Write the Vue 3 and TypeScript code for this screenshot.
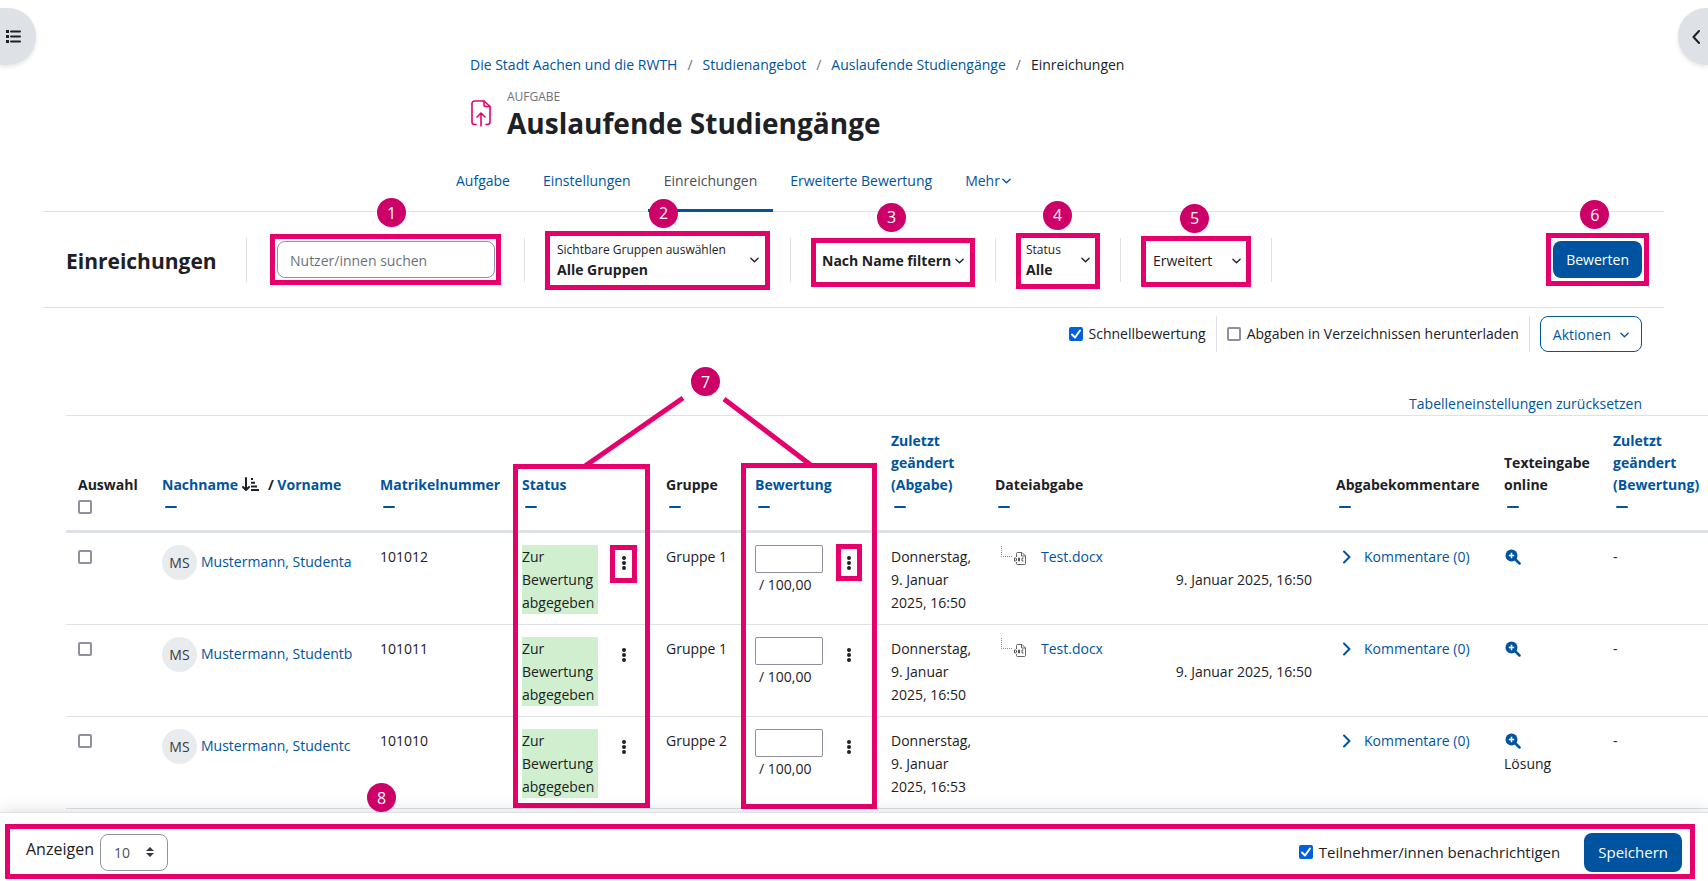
<script setup lang="ts">
import { ref } from 'vue'

interface Submission {
  name: string
  matriculation: string
  group: string
  time: string
  file: string | null
  solution: boolean
}

const crumbs = ['Die Stadt Aachen und die RWTH', 'Studienangebot', 'Auslaufende Studiengänge']
const tabs = ['Aufgabe', 'Einstellungen', 'Einreichungen', 'Erweiterte Bewertung']
const columns = [
  { key: 'sel', label: 'Auswahl', link: false },
  { key: 'name', label: 'Nachname', link: true },
  { key: 'mat', label: 'Matrikelnummer', link: true },
  { key: 'status', label: 'Status', link: true },
  { key: 'group', label: 'Gruppe', link: false },
  { key: 'grade', label: 'Bewertung', link: true },
  { key: 'changed', label: 'Zuletzt geändert (Abgabe)', link: true },
  { key: 'file', label: 'Dateiabgabe', link: false },
  { key: 'comments', label: 'Abgabekommentare', link: false },
  { key: 'text', label: 'Texteingabe online', link: false },
  { key: 'graded', label: 'Zuletzt geändert (Bewertung)', link: true },
]
const rows: Submission[] = [
  { name: 'Mustermann, Studenta', matriculation: '101012', group: 'Gruppe 1', time: '16:50', file: 'Test.docx', solution: false },
  { name: 'Mustermann, Studentb', matriculation: '101011', group: 'Gruppe 1', time: '16:50', file: 'Test.docx', solution: false },
  { name: 'Mustermann, Studentc', matriculation: '101010', group: 'Gruppe 2', time: '16:53', file: null, solution: true },
]
const quickGrading = ref(true)
const folders = ref(false)
const notify = ref(true)
const search = ref('')
const perPage = ref('10')
</script>

<template>
  <div class="page">
    <button class="drawer drawer-left" type="button" aria-label="Kursindex öffnen">
      <svg width="15" height="14" viewBox="0 0 15 14">
        <path d="M0 0h3v3H0zM0 5h3v3H0zM0 10h3v3H0z" fill="#1d2125" />
        <path d="M5 1.500h9M5 6.500h9M5 11.500h9" stroke="#1d2125" stroke-width="2" stroke-linecap="round" />
      </svg>
    </button>
    <button class="drawer drawer-right" type="button" aria-label="Blockleiste öffnen">
      <svg width="10" height="14" viewBox="0 0 10 14">
        <path d="M8 1L2.500 7L8 13" fill="none" stroke="#1d2125" stroke-width="2" stroke-linecap="round" stroke-linejoin="round" />
      </svg>
    </button>

    <main class="main">
      <header class="header">
        <nav class="crumbs" aria-label="Brotkrümel">
          <template v-for="c in crumbs" :key="c">
            <a href="#">{{ c }}</a><span class="slash">/</span>
          </template>
          <span>Einreichungen</span>
        </nav>
        <div class="title">
          <svg class="title-icon" width="20" height="27" viewBox="0 0 20 27" fill="none" stroke="#e6006b" stroke-width="1.6" stroke-linecap="round" stroke-linejoin="round">
            <path d="M5 24.500H3.500A2.500 2.500 0 0 1 1 22V3.500A2.500 2.500 0 0 1 3.500 1H13l6 5.500V22a2.500 2.500 0 0 1-2.500 2.500H15" />
            <path d="M13 1v4a1.500 1.500 0 0 0 1.500 1.500H19" />
            <path d="M10 26V13.500M6 17l4-4 4 4" />
          </svg>
          <div>
            <div class="kind">AUFGABE</div>
            <h1>Auslaufende Studiengänge</h1>
          </div>
        </div>
        <nav class="tabs" aria-label="Aufgabe">
          <a v-for="t in tabs" :key="t" href="#" class="tab" :class="{ active: t === 'Einreichungen' }">{{ t }}</a>
          <a href="#" class="tab">Mehr<svg class="caret" viewBox="0 0 10 6"><path d="M1 1l4 4 4-4" /></svg></a>
        </nav>
      </header>

      <section class="bar">
        <h2>Einreichungen</h2>
        <span class="rule"></span>
        <div class="tool search">
          <input v-model="search" type="text" placeholder="Nutzer/innen suchen" aria-label="Nutzer/innen suchen">
          <span class="frame"></span><span class="mark">1</span>
        </div>
        <span class="rule"></span>
        <div class="tool groups">
          <button type="button" class="pick"><span class="lines"><small>Sichtbare Gruppen auswählen</small><b>Alle Gruppen</b></span><svg class="caret" viewBox="0 0 10 6"><path d="M1 1l4 4 4-4" /></svg></button>
          <span class="frame"></span><span class="mark">2</span>
        </div>
        <span class="rule"></span>
        <div class="tool names">
          <button type="button" class="pick"><b>Nach Name filtern</b><svg class="caret" viewBox="0 0 10 6"><path d="M1 1l4 4 4-4" /></svg></button>
          <span class="frame"></span><span class="mark">3</span>
        </div>
        <span class="rule"></span>
        <div class="tool state">
          <button type="button" class="pick"><span class="lines"><small>Status</small><b>Alle</b></span><svg class="caret" viewBox="0 0 10 6"><path d="M1 1l4 4 4-4" /></svg></button>
          <span class="frame"></span><span class="mark">4</span>
        </div>
        <span class="rule"></span>
        <div class="tool extended">
          <button type="button" class="pick"><span>Erweitert</span><svg class="caret" viewBox="0 0 10 6"><path d="M1 1l4 4 4-4" /></svg></button>
          <span class="frame"></span><span class="mark">5</span>
        </div>
        <span class="rule"></span>
        <div class="tool grade">
          <button type="button" class="primary">Bewerten</button>
          <span class="frame"></span><span class="mark">6</span>
        </div>
      </section>

      <section class="options">
        <label><input v-model="quickGrading" type="checkbox">Schnellbewertung</label>
        <label class="ruled"><input v-model="folders" type="checkbox">Abgaben in Verzeichnissen herunterladen</label>
        <div class="ruled"><button type="button" class="outline">Aktionen<svg class="caret" viewBox="0 0 10 6"><path d="M1 1l4 4 4-4" /></svg></button></div>
      </section>

      <div class="reset"><a href="#">Tabelleneinstellungen zurücksetzen</a></div>

      <div class="sheet">
        <table>
          <colgroup><col v-for="c in columns" :key="c.key" :class="'c-' + c.key"></colgroup>
          <thead>
            <tr>
              <th v-for="c in columns" :key="c.key" scope="col">
                <div class="label">
                  <template v-if="c.key === 'name'">
                    <a href="#">Nachname</a>
                    <svg class="sort" width="17" height="15" viewBox="0 0 17 15" fill="none" stroke="#1d2125" stroke-width="2">
                      <path d="M4 1v12M1 10l3 3 3-3" stroke-linecap="round" stroke-linejoin="round" />
                      <path d="M9 2h2M9 5.700h4M9 9.400h6M9 13.100h8" />
                    </svg>
                    <span>/</span> <a href="#">Vorname</a>
                  </template>
                  <a v-else-if="c.link" href="#">{{ c.label }}</a>
                  <template v-else>{{ c.label }}</template>
                </div>
                <div class="fold">
                  <input v-if="c.key === 'sel'" type="checkbox" aria-label="Alle auswählen">
                  <button v-else type="button" :aria-label="c.label + ' ausblenden'"></button>
                </div>
              </th>
            </tr>
          </thead>
          <tbody>
            <tr v-for="r in rows" :key="r.name">
              <td class="tick"><input type="checkbox" :aria-label="r.name + ' auswählen'"></td>
              <td><a href="#" class="person"><span class="avatar">MS</span>{{ r.name }}</a></td>
              <td>{{ r.matriculation }}</td>
              <td>
                <div class="split">
                  <div class="submitted">Zur Bewertung abgegeben</div>
                  <button type="button" class="dots" aria-label="Aktionen"><svg width="4" height="14" viewBox="0 0 4 14" fill="#1d2125"><circle cx="2" cy="2" r="2" /><circle cx="2" cy="7" r="2" /><circle cx="2" cy="12" r="2" /></svg></button>
                </div>
              </td>
              <td class="nowrap">{{ r.group }}</td>
              <td>
                <div class="split">
                  <div class="points"><input type="text" :aria-label="'Bewertung ' + r.name"><span>/ 100,00</span></div>
                  <button type="button" class="dots" aria-label="Aktionen"><svg width="4" height="14" viewBox="0 0 4 14" fill="#1d2125"><circle cx="2" cy="2" r="2" /><circle cx="2" cy="7" r="2" /><circle cx="2" cy="12" r="2" /></svg></button>
                </div>
              </td>
              <td>Donnerstag,<br>9. Januar<br>2025, {{ r.time }}</td>
              <td>
                <template v-if="r.file">
                  <div class="file">
                    <svg width="26" height="22" viewBox="0 0 26 22" fill="none">
                      <path d="M0.500 1v10.500h11" stroke="#888" stroke-dasharray="1 1" />
                      <path d="M15.500 12V8.500a1 1 0 0 1 1-1H21l3.500 3.500v7.500a1 1 0 0 1-1 1h-7a1 1 0 0 1-1-1V17M20.500 7.500V11h4" stroke="#666" />
                      <path d="M13.500 13v3h1a1 1 0 0 0 1-1v-1a1 1 0 0 0-1-1zM17.500 13h1v3h-1zM22.500 13h-1.500v3h1.500" stroke="#555" />
                    </svg>
                    <a href="#">{{ r.file }}</a>
                  </div>
                  <div class="stamp">9. Januar 2025, 16:50</div>
                </template>
              </td>
              <td>
                <a href="#" class="comments"><svg width="10" height="14" viewBox="0 0 10 14"><path d="M2 1.500L7.500 7L2 12.500" fill="none" stroke="currentColor" stroke-width="2" stroke-linecap="round" stroke-linejoin="round" /></svg>Kommentare (0)</a>
              </td>
              <td>
                <a href="#" class="magnify" aria-label="Vollständigen Text ansehen"><svg width="16" height="16" viewBox="0 0 16 16"><circle cx="6.500" cy="6.500" r="6" fill="#00549f" /><path d="M10.500 10.500L14.500 14.500" stroke="#00549f" stroke-width="2.500" stroke-linecap="round" /><path d="M6.500 3.800v5.400M3.800 6.500h5.400" stroke="#fff" stroke-width="1.500" /></svg></a>
                <div v-if="r.solution">Lösung</div>
              </td>
              <td>-</td>
            </tr>
          </tbody>
        </table>

        <span class="frame area-status"></span>
        <span class="frame area-grade"></span>
        <span class="frame menu-status"></span>
        <span class="frame menu-grade"></span>
        <svg class="arms" width="240" height="80" viewBox="0 0 240 80" stroke="#e6006b" stroke-width="5">
          <path d="M103 4L5 72M144 5L232 72" />
        </svg>
        <span class="mark seven">7</span>
      </div>
    </main>

    <footer class="footer">
      <label class="per"><span class="per-text">Anzeigen</span>
        <span class="select">
          <select v-model="perPage"><option>10</option><option>20</option><option>50</option></select>
          <svg width="8" height="10" viewBox="0 0 8 10" fill="#343a40"><path d="M4 0l4 4H0zM4 10L0 6h8z" /></svg>
        </span>
      </label>
      <div class="save">
        <label><input v-model="notify" type="checkbox">Teilnehmer/innen benachrichtigen</label>
        <button type="button" class="primary">Speichern</button>
      </div>
      <span class="frame"></span><span class="mark">8</span>
    </footer>
  </div>
</template>

<style>
body {
  margin: 0;
}
</style>

<style scoped>
.page {
  position: relative;
  display: flex;
  flex-direction: column;
  height: 100vh;
  overflow: hidden;
  background: #fff;
  color: #1d2125;
  font: 14px/22px "Open Sans", "Noto Sans", sans-serif;
}
.page * {
  box-sizing: border-box;
}
a {
  color: #00549f;
  text-decoration: none;
}
button,
input,
select {
  margin: 0;
  font: inherit;
  color: inherit;
}
button {
  padding: 0;
  border: 0;
  background: none;
}
input[type="checkbox"] {
  flex: none;
  appearance: none;
  width: 14px;
  height: 14px;
  border: 2px solid #8f8f9d;
  border-radius: 2px;
  background: #fff;
}
input[type="checkbox"]:checked {
  border: 0;
  background: #0060df url("data:image/svg+xml,%3Csvg xmlns='http://www.w3.org/2000/svg' viewBox='0 0 14 14'%3E%3Cpath d='M3 7.500l3 3 5-7' fill='none' stroke='white' stroke-width='2' stroke-linecap='round' stroke-linejoin='round'/%3E%3C/svg%3E");
}
.caret {
  flex: none;
  width: 9px;
  height: 6px;
  fill: none;
  stroke: currentColor;
  stroke-width: 1.5;
  stroke-linecap: round;
  stroke-linejoin: round;
}
.drawer {
  position: absolute;
  top: 8px;
  z-index: 2;
  display: flex;
  align-items: center;
  height: 57px;
  background: #dee2e6;
  box-shadow: 0 2px 4px rgba(0, 0, 0, 0.1);
}
.drawer-left {
  left: 0;
  width: 36px;
  padding-left: 6px;
  border-radius: 0 28px 28px 0;
}
.drawer-right {
  right: 0;
  width: 30px;
  padding-left: 13px;
  border-radius: 28px 0 0 28px;
}
.main {
  flex: 1;
  min-height: 0;
  overflow: hidden;
}
.header {
  width: 830px;
  margin: 0 auto;
  padding-top: 54px;
}
.crumbs {
  display: flex;
  padding-left: 31px;
}
.slash {
  padding: 0 10px;
  color: #6a737b;
}
.title {
  display: flex;
  gap: 16px;
  padding: 12px 0 0 32px;
}
.title-icon {
  margin-top: 12px;
}
.kind {
  font-size: 12px;
  line-height: 18px;
  color: #6a737b;
}
h1 {
  margin: 0;
  font-size: 28px;
  line-height: 34px;
  font-weight: 700;
}
.tabs {
  display: flex;
  gap: 1px;
  padding: 11px 0 0 1px;
}
.tab {
  display: flex;
  align-items: center;
  gap: 2px;
  height: 61px;
  padding: 2px 16px 0;
  border-bottom: 3px solid transparent;
}
.tab.active {
  position: relative;
  color: #495057;
  border-color: #00549f;
}
.bar {
  display: flex;
  align-items: center;
  gap: 20px;
  height: 97px;
  margin: -1px 44px 0 43px;
  padding: 0 22px 0 23px;
  border: solid #dee2e6;
  border-width: 1px 0;
}
h2 {
  width: 160px;
  margin: 0;
  padding-top: 2px;
  font-size: 21px;
  font-weight: 700;
}
.rule {
  width: 1px;
  height: 44px;
  background: #dee2e6;
}
.tool {
  position: relative;
}
.tool .pick {
  display: flex;
  align-items: center;
  justify-content: space-between;
  width: 100%;
  height: 44px;
  text-align: left;
}
.lines {
  display: flex;
  flex-direction: column;
  line-height: 20px;
}
small {
  font-size: 12px;
}
.search {
  margin: 0 9px 0 10px;
}
.search input {
  display: block;
  width: 218px;
  height: 37px;
  padding: 2px 12px 0;
  border: 1px solid #8f959e;
  border-radius: 8px;
  background: #fff;
}
.search input::placeholder {
  color: #6a737b;
  opacity: 1;
}
.groups {
  width: 225px;
  padding: 0 11px 0 12px;
}
.names {
  width: 164px;
  padding: 0 11px;
}
.state {
  width: 84px;
  padding: 0 10px;
}
.extended {
  width: 110px;
  padding: 0 10px 0 12px;
}
.names .pick,
.extended .pick {
  padding-top: 2px;
}
.grade {
  margin-left: auto;
}
.primary {
  height: 37px;
  padding: 1px 13px 0;
  border-radius: 8px;
  background: #00549f;
  color: #fff;
}
.frame {
  position: absolute;
  border: 5px solid #e6006b;
  pointer-events: none;
}
.mark {
  position: absolute;
  display: flex;
  align-items: center;
  justify-content: center;
  width: 29px;
  height: 29px;
  border-radius: 50%;
  background: #cc0066;
  color: #fff;
  font-size: 16px;
}
.search .frame {
  inset: -7px -6px -7px -7px;
}
.search .mark {
  top: -43px;
  left: 100px;
}
.groups .frame {
  inset: -7px 0 -8px;
}
.groups .mark {
  top: -39px;
  left: 104px;
}
.names .frame {
  inset: 0 0 -5px;
}
.names .mark {
  top: -35px;
  left: 66px;
}
.state .frame {
  inset: -5px 0 -7px;
}
.state .mark {
  top: -37px;
  left: 27px;
}
.extended .frame {
  inset: -2px 0 -5px;
}
.extended .mark {
  top: -34px;
  left: 39px;
}
.grade .frame {
  inset: -8px -7px;
}
.grade .mark {
  top: -41px;
  left: 27px;
}
.options {
  display: flex;
  justify-content: flex-end;
  gap: 10px;
  height: 36px;
  margin: 8px 66px 0;
}
.options label,
.options .ruled {
  display: flex;
  align-items: center;
}
.options label {
  gap: 6px;
}
.options .ruled {
  padding-left: 10px;
  border-left: 1px solid #dee2e6;
}
.outline {
  display: flex;
  align-items: center;
  gap: 9px;
  height: 36px;
  padding: 1px 12px 0;
  border: 1px solid #00549f;
  border-radius: 8px;
  color: #00549f;
}
.reset {
  margin: 41px 66px 0;
  text-align: right;
}
.sheet {
  position: relative;
  margin-left: 66px;
}
table {
  width: 1648px;
  min-width: 100%;
  table-layout: fixed;
  border-collapse: separate;
  border-spacing: 0;
}
.c-sel { width: 84px; }
.c-name { width: 218px; }
.c-mat { width: 142px; }
.c-status { width: 144px; }
.c-group { width: 89px; }
.c-grade { width: 136px; }
.c-changed { width: 104px; }
.c-file { width: 341px; }
.c-comments { width: 168px; }
.c-text { width: 109px; }
.c-graded { width: 113px; }
th {
  height: 118px;
  padding: 12px;
  border-top: 1px solid #dee2e6;
  border-bottom: 3px solid #dee2e6;
  font-weight: 700;
  text-align: left;
  vertical-align: bottom;
}
td {
  height: 92px;
  padding: 12px 12px 10px;
  border-bottom: 1px solid #dee2e6;
  line-height: 23px;
  vertical-align: top;
}
.sort {
  margin: 0 9px 0 4px;
  vertical-align: -2px;
}
.fold {
  display: flex;
  align-items: center;
  height: 22px;
}
.fold button {
  width: 12px;
  height: 2px;
  margin-left: 3px;
  border-radius: 1px;
  background: #00549f;
}
.tick input {
  display: block;
  margin-top: 5px;
}
.person {
  display: flex;
  gap: 4px;
  line-height: 33px;
  white-space: nowrap;
}
.avatar {
  display: flex;
  align-items: center;
  justify-content: center;
  width: 35px;
  height: 35px;
  border-radius: 50%;
  background: #e9ecef;
  color: #343a40;
}
.nowrap {
  white-space: nowrap;
}
.split {
  display: flex;
  justify-content: space-between;
}
.submitted {
  width: 76px;
  background: #cfefcf;
}
.dots {
  width: 4px;
  height: 36px;
  margin-right: 16px;
}
.dots svg {
  display: block;
  margin: auto;
}
.points {
  display: flex;
  flex-direction: column;
}
.points input {
  width: 68px;
  height: 28px;
  border: 1px solid #8f8f9d;
  border-radius: 2px;
}
.points span {
  padding-left: 4px;
}
.file {
  display: flex;
  gap: 14px;
  padding-left: 6px;
}
.stamp {
  text-align: right;
}
.comments {
  display: flex;
  align-items: center;
  gap: 12px;
  padding-left: 6px;
}
.magnify {
  display: flex;
  align-items: center;
  height: 23px;
  padding-left: 1px;
}
.area-status {
  top: 49px;
  left: 447px;
  width: 137px;
  height: 344px;
}
.area-grade {
  top: 48px;
  left: 675px;
  width: 136px;
  height: 346px;
}
.menu-status {
  top: 130px;
  left: 544px;
  width: 27px;
  height: 38px;
}
.menu-grade {
  top: 129px;
  left: 770px;
  width: 26px;
  height: 37px;
}
.arms {
  position: absolute;
  top: -21px;
  left: 514px;
}
.seven {
  top: -48px;
  left: 625px;
}
.footer {
  position: relative;
  display: flex;
  align-items: center;
  justify-content: space-between;
  height: 69px;
  padding: 10px 26px 0;
  border-top: 1px solid #dee2e6;
  background: #fff;
  box-shadow: 0 0 16px rgba(0, 0, 0, 0.15);
  font-size: 15px;
}
.footer label {
  display: flex;
  align-items: center;
  gap: 6px;
}
.footer .per {
  align-items: flex-start;
}
.per-text {
  line-height: 30px;
  font-size: 16px;
}
.select {
  position: relative;
  display: flex;
  align-items: center;
  font-size: 14px;
}
.select select {
  appearance: none;
  width: 68px;
  height: 37px;
  padding: 2px 13px 0;
  border: 1px solid #8f959e;
  border-radius: 8px;
  background: #fff;
  color: #495057;
}
.select svg {
  position: absolute;
  right: 14px;
}
.save {
  display: flex;
  align-items: center;
  gap: 24px;
}
.save .primary {
  height: 39px;
  padding: 0 14px;
}
.footer .frame {
  inset: 11px 13px 2px 5px;
}
.footer .mark {
  top: -30px;
  left: 367px;
}
</style>
